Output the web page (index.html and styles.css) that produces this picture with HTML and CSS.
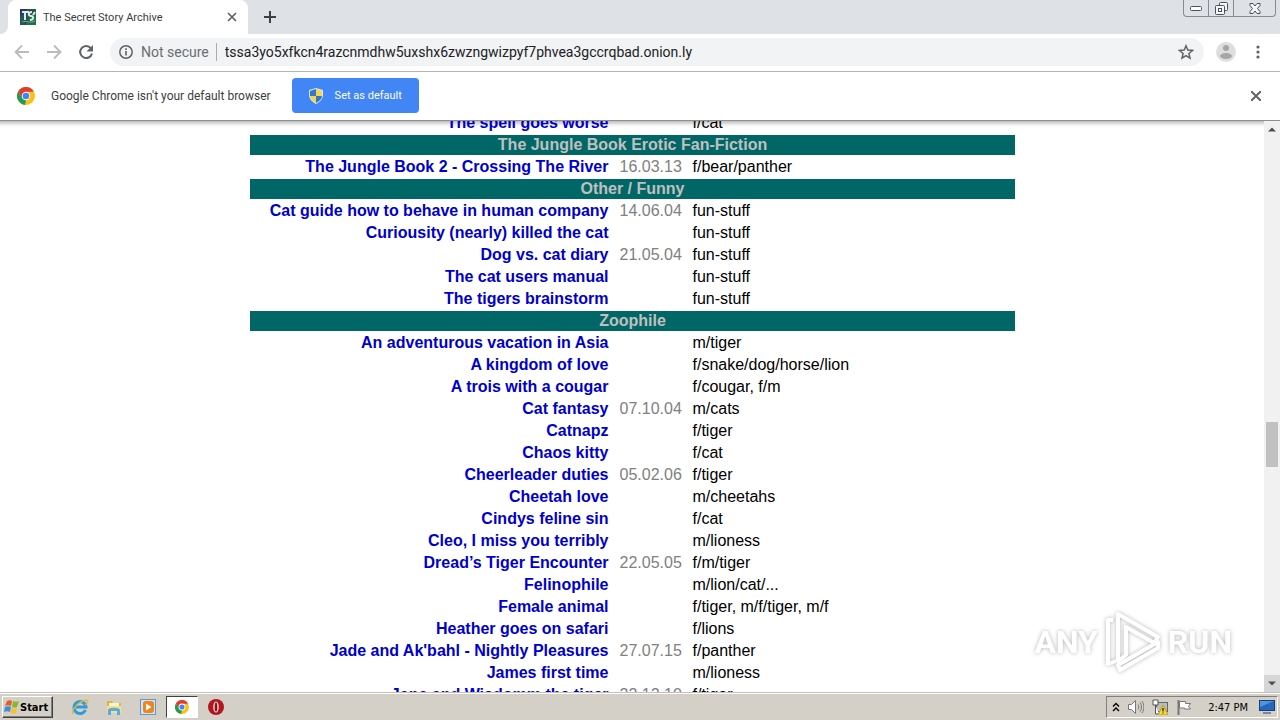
FILE: index.html
```
<!DOCTYPE html>
<html lang="en">
<head>
  <meta charset="UTF-8">
  <meta name="viewport" content="width=device-width, initial-scale=1.0">
  <title>The Secret Story Archive</title>
  <link rel="stylesheet" href="styles.css">
</head>
<body>
  <header class="tab-strip">
    <div class="tab-edge"></div>
    <div class="tab">
      <svg class="favicon" width="16" height="16" viewBox="0 0 16 16">
        <rect width="16" height="16" fill="#23584f"/>
        <path d="M0 0h7l-3 5-4 2z" fill="#26366f"/>
        <path d="M9 9l7-5v12H6z" fill="#1c7243"/>
        <path d="M2 3h7M5 3v8M12 3c-4 0-4 4-1 4s3 4-1 4M13 6l2-3" stroke="#dfe9ee" stroke-width="2" fill="none"/>
        <path d="M2 13c4-2 8 2 13-1" stroke="#7fa9a2" fill="none"/>
      </svg>
      <span class="tab-title">The Secret Story Archive</span>
      <button class="icon-btn" aria-label="Close tab">
        <svg width="10" height="10" viewBox="0 0 10 10"><path d="M1 1l8 8M9 1l-8 8" stroke="#5f6368" stroke-width="1.7"/></svg>
      </button>
    </div>
    <button class="icon-btn new-tab" aria-label="New tab">
      <svg width="12" height="12" viewBox="0 0 12 12"><path d="M6 0v12M0 6h12" stroke="#3c4043" stroke-width="2"/></svg>
    </button>
    <div class="window-buttons">
      <button aria-label="Minimize"><svg width="12" height="5" viewBox="0 0 12 5"><rect x=".5" y=".5" width="11" height="4" rx="1" fill="#fff" stroke="#4a505c"/></svg></button>
      <button aria-label="Restore"><svg width="13" height="13" viewBox="0 0 13 13" fill="#f5f6f8" stroke="#4a505c"><rect x="4.500" y=".5" width="8" height="8" rx="1"/><rect x=".5" y="3.500" width="9" height="9" rx="1"/><rect x="3.500" y="6.500" width="3" height="3"/></svg></button>
      <button class="close" aria-label="Close"><svg width="12" height="11" viewBox="0 0 12 11"><path d="M1 .5h3l2 2.500 2-2.500h3v2L8.500 5.500 11 8.500v2H8L6 8l-2 2.500H1v-2l2.500-3L1 2.500z" fill="#f5f6f8" stroke="#4a505c"/></svg></button>
    </div>
  </header>

  <nav class="toolbar">
    <button class="icon-btn" aria-label="Back"><svg width="16" height="16" viewBox="0 0 16 16"><path d="M15 8H2M8 1.500L1.500 8 8 14.500" fill="none" stroke="#babcbe" stroke-width="1.800"/></svg></button>
    <button class="icon-btn" aria-label="Forward"><svg width="16" height="16" viewBox="0 0 16 16"><path d="M1 8h13M8 1.500L14.500 8 8 14.500" fill="none" stroke="#babcbe" stroke-width="1.800"/></svg></button>
    <button class="icon-btn" aria-label="Reload"><svg width="16" height="16" viewBox="0 0 16 16"><path d="M12.800 4.200A6 6 0 1 0 14 9.500" fill="none" stroke="#5f6368" stroke-width="2"/><path d="M15 1v6.500H8.500z" fill="#5f6368"/></svg></button>
    <div class="omnibox">
      <svg width="14" height="14" viewBox="0 0 14 14"><circle cx="7" cy="7" r="6.200" fill="none" stroke="#5f6368" stroke-width="1.500"/><path d="M7 6v4.500M7 3.300v1.700" stroke="#5f6368" stroke-width="1.600"/></svg>
      <label class="security" for="address">Not secure</label>
      <input id="address" class="address" type="text" value="tssa3yo5xfkcn4razcnmdhw5uxshx6zwzngwizpyf7phvea3gccrqbad.onion.ly">
      <button class="icon-btn" aria-label="Bookmark"><svg width="16" height="16" viewBox="0 0 16 16"><path d="M8 1.800l1.800 4.300 4.700.4-3.600 3 1.100 4.600-4-2.500-4 2.500 1.100-4.600-3.600-3 4.700-.4z" fill="none" stroke="#5f6368" stroke-width="1.500"/></svg></button>
    </div>
    <button class="icon-btn" aria-label="Profile"><svg width="20" height="20" viewBox="0 0 20 20"><circle cx="10" cy="10" r="10" fill="#dedede"/><circle cx="10" cy="6" r="3" fill="#a6a6a6"/><ellipse cx="10" cy="14" rx="6" ry="3" fill="#a6a6a6"/></svg></button>
    <button class="icon-btn menu-btn" aria-label="Menu"><svg width="16" height="16" viewBox="0 0 16 16" fill="#5f6368"><circle cx="8" cy="3" r="1.600"/><circle cx="8" cy="8" r="1.600"/><circle cx="8" cy="13" r="1.600"/></svg></button>
  </nav>

  <div class="infobar">
    <svg width="18" height="18" viewBox="0 0 18 18">
      <circle cx="9" cy="9" r="9" fill="#fbc116"/>
      <path d="M1.200 4.500A9 9 0 0 1 16.800 4.500L9 5 5 11z" fill="#e33b2e"/>
      <path d="M1.200 4.500L5 11l4 2-1 5A9 9 0 0 1 1.200 4.500z" fill="#1f9d55"/>
      <circle cx="9" cy="9" r="4.200" fill="#fff"/><circle cx="9" cy="9" r="3.300" fill="#4285f4"/>
    </svg>
    <span class="infobar-text">Google Chrome isn't your default browser</span>
    <button class="default-btn">
      <svg width="14" height="16" viewBox="0 0 14 16">
        <path d="M7 0l7 2v5c0 4-3 7-7 9-4-2-7-5-7-9V2z" fill="#d8e4f0"/>
        <path d="M7 1v7H1V3z" fill="#3476ca"/><path d="M7 1l6 2v5H7z" fill="#fbd44c"/>
        <path d="M1 8h6v7C4 13 1 11 1 8z" fill="#fbd44c"/><path d="M7 8h6c0 3-3 5-6 7z" fill="#3476ca"/>
      </svg>
      Set as default
    </button>
    <button class="icon-btn infobar-close" aria-label="Dismiss"><svg width="10" height="10" viewBox="0 0 10 10"><path d="M0 0l10 10M10 0L0 10" stroke="#5f6368" stroke-width="2"/></svg></button>
  </div>

  <main class="viewport">
    <div class="page">
      <table class="stories">
        <colgroup><col class="col-title"><col class="col-date"><col></colgroup>
        <tr><td><a href="#">The spell goes worse</a></td><td></td><td>f/cat</td></tr>
        <tr><th colspan="3">The Jungle Book Erotic Fan-Fiction</th></tr>
        <tr><td><a href="#">The Jungle Book 2 - Crossing The River</a></td><td>16.03.13</td><td>f/bear/panther</td></tr>
        <tr><th colspan="3">Other / Funny</th></tr>
        <tr><td><a href="#">Cat guide how to behave in human company</a></td><td>14.06.04</td><td>fun-stuff</td></tr>
        <tr><td><a href="#">Curiousity (nearly) killed the cat</a></td><td></td><td>fun-stuff</td></tr>
        <tr><td><a href="#">Dog vs. cat diary</a></td><td>21.05.04</td><td>fun-stuff</td></tr>
        <tr><td><a href="#">The cat users manual</a></td><td></td><td>fun-stuff</td></tr>
        <tr><td><a href="#">The tigers brainstorm</a></td><td></td><td>fun-stuff</td></tr>
        <tr><th colspan="3">Zoophile</th></tr>
        <tr><td><a href="#">An adventurous vacation in Asia</a></td><td></td><td>m/tiger</td></tr>
        <tr><td><a href="#">A kingdom of love</a></td><td></td><td>f/snake/dog/horse/lion</td></tr>
        <tr><td><a href="#">A trois with a cougar</a></td><td></td><td>f/cougar, f/m</td></tr>
        <tr><td><a href="#">Cat fantasy</a></td><td>07.10.04</td><td>m/cats</td></tr>
        <tr><td><a href="#">Catnapz</a></td><td></td><td>f/tiger</td></tr>
        <tr><td><a href="#">Chaos kitty</a></td><td></td><td>f/cat</td></tr>
        <tr><td><a href="#">Cheerleader duties</a></td><td>05.02.06</td><td>f/tiger</td></tr>
        <tr><td><a href="#">Cheetah love</a></td><td></td><td>m/cheetahs</td></tr>
        <tr><td><a href="#">Cindys feline sin</a></td><td></td><td>f/cat</td></tr>
        <tr><td><a href="#">Cleo, I miss you terribly</a></td><td></td><td>m/lioness</td></tr>
        <tr><td><a href="#">Dread’s Tiger Encounter</a></td><td>22.05.05</td><td>f/m/tiger</td></tr>
        <tr><td><a href="#">Felinophile</a></td><td></td><td>m/lion/cat/...</td></tr>
        <tr><td><a href="#">Female animal</a></td><td></td><td>f/tiger, m/f/tiger, m/f</td></tr>
        <tr><td><a href="#">Heather goes on safari</a></td><td></td><td>f/lions</td></tr>
        <tr><td><a href="#">Jade and Ak'bahl - Nightly Pleasures</a></td><td>27.07.15</td><td>f/panther</td></tr>
        <tr><td><a href="#">James first time</a></td><td></td><td>m/lioness</td></tr>
        <tr><td><a href="#">Jane and Wisdomm the tiger</a></td><td>22.12.10</td><td>f/tiger</td></tr>
      </table>
    </div>
    <div class="scrollbar">
      <svg width="16" height="17" viewBox="0 0 16 17"><path d="M4 10.500L8 6.500l4 4z" fill="#505050"/></svg>
      <div class="track"><div class="thumb"></div></div>
      <svg width="16" height="17" viewBox="0 0 16 17"><rect width="16" height="17" fill="#d6d6d6"/><path d="M4 6.500l4 4 4-4z" fill="#505050"/></svg>
    </div>
    <div class="watermark">
      <span>ANY</span>
      <svg width="58" height="64" viewBox="0 0 58 64" fill="none" stroke="#fff" stroke-width="4" stroke-linejoin="round">
        <path d="M14 4L54 27 50 33 22 17v28l-8 6z"/>
        <path d="M9 10H4v44l8-3M16 60l38-22v-6L14 55z"/>
      </svg>
      <span>RUN</span>
    </div>
  </main>

  <footer class="taskbar">
    <button class="start">
      <svg width="16" height="16" viewBox="0 0 16 16">
        <path d="M3 2c2-1 3-1 5 0L7 7C5 6 3 6 1 7z" fill="#ea5a24"/><path d="M9 2c2 1 4 1 6 0l-2 6c-2 1-3 1-5 0z" fill="#86b832"/>
        <path d="M1 8c2-1 4-1 6 0l-1 5c-2-1-4-1-6 0z" fill="#3b8ede"/><path d="M8 9c2 1 3 1 5 0l-1 5c-2 1-4 1-6 0z" fill="#f8c12c"/>
      </svg>
      Start
    </button>
    <button class="task" aria-label="Internet Explorer"><svg width="18" height="18" viewBox="0 0 18 18" fill="none"><path d="M14.500 12a6 6 0 1 1 .5-3H5" stroke="#2f9bdc" stroke-width="3"/><path d="M2 16C-1 13 9 2 16 2c2 1 0 4-2 5" stroke="#e5b73a" stroke-width="1.300"/></svg></button>
    <button class="task" aria-label="Windows Explorer"><svg width="18" height="18" viewBox="0 0 18 18"><path d="M2 3h5l1 2h8v10H2z" fill="#dfb44a"/><path d="M4 5h10v3H4z" fill="#fff4c4"/><path d="M2 8h14v7H2z" fill="#f5df8e"/><path d="M3 17v-5c0-3 12-3 12 0v5h-3v-4H6v4z" fill="#58addd"/></svg></button>
    <button class="task" aria-label="Media Player"><svg width="18" height="18" viewBox="0 0 18 18"><rect x="1.500" y="1.500" width="15" height="15" fill="#cfe4f5" stroke="#5b9bd0"/><rect x="4" y="3" width="11" height="12" rx="3" fill="#f0851c"/><path d="M7 5.500v7L12.500 9z" fill="#fff"/></svg></button>
    <button class="task active" aria-label="Google Chrome"><svg width="14" height="14" viewBox="0 0 18 18"><circle cx="9" cy="9" r="9" fill="#fbc116"/><path d="M1.200 4.500A9 9 0 0 1 16.800 4.500L9 5 5 11z" fill="#e33b2e"/><path d="M1.200 4.500L5 11l4 2-1 5A9 9 0 0 1 1.200 4.500z" fill="#1f9d55"/><circle cx="9" cy="9" r="4.400" fill="#fff"/><circle cx="9" cy="9" r="3.300" fill="#4285f4"/></svg></button>
    <button class="task" aria-label="Opera"><svg width="18" height="18" viewBox="0 0 18 18"><circle cx="9" cy="9" r="8" fill="#b3141d"/><ellipse cx="9" cy="9" rx="2.800" ry="5.500" fill="#e9d6d6"/><ellipse cx="9" cy="9" rx="1.300" ry="4.500" fill="#8b0f16"/></svg></button>

    <div class="tray">
      <svg width="8" height="10" viewBox="0 0 8 10"><path d="M1 4.500l3-3 3 3M1 9l3-3 3 3" fill="none" stroke="#000" stroke-width="1.400"/></svg>
      <svg width="16" height="16" viewBox="0 0 16 16" stroke="#777"><path d="M.5 5.500h3l4-4v13l-4-4h-3z" fill="#fff"/><path d="M10 5.500c1 1.500 1 3.500 0 5M12 3.500c2 3 2 6 0 9M14 2c2.500 4 2.500 8 0 12" fill="none"/></svg>
      <svg width="16" height="16" viewBox="0 0 16 16"><rect x="4.500" y="3.500" width="11" height="9" fill="#b9bcc0" stroke="#666"/><path d="M1 1h5v5H1zM3.500 6v9H7" fill="#fff" stroke="#555"/><path d="M11 6l5 10H6z" fill="#ffdc2e" stroke="#b9991b"/><path d="M11 9v3.500M11 13.500v1" stroke="#222" stroke-width="1.300"/></svg>
      <svg width="16" height="16" viewBox="0 0 16 16"><path d="M2.500 1v15" stroke="#777" stroke-width="2"/><path d="M3.500 2.500h6v2h5l-2 3 2 2.500h-6V9h-5z" fill="#fff" stroke="#777"/></svg>
      <time class="clock">2:47 PM</time>
      <svg class="desktop" width="16" height="14" viewBox="0 0 16 14"><rect x=".5" y=".5" width="15" height="10" fill="#2467bd" stroke="#173f78"/><path d="M1 1h14L1 7z" fill="#4f94dd"/><path d="M4 13h8" stroke="#7b8794" stroke-width="2"/></svg>
    </div>
  </footer>
</body>
</html>
```
FILE: styles.css
```
* {
  margin: 0;
  padding: 0;
  box-sizing: border-box;
}

body {
  display: flex;
  flex-direction: column;
  height: 100vh;
  overflow: hidden;
  background: #fff;
  color: #000;
  font-family: Roboto, "Noto Sans", sans-serif;
  font-size: 12px;
}

button,
input {
  font: inherit;
  color: inherit;
  background: none;
  border: none;
}

svg {
  display: block;
  flex: none;
}

.icon-btn {
  display: flex;
  flex: none;
}

/* Tabs */
.tab-strip {
  display: flex;
  flex: none;
  height: 34px;
  background: #dee1e6;
}

.tab-edge {
  width: 8px;
  background: #fff;
}

.tab-edge::before {
  content: "";
  display: block;
  height: 100%;
  background: #dee1e6;
  border-bottom-right-radius: 8px;
}

.tab {
  display: flex;
  align-items: center;
  width: 240px;
  padding: 0 11px 0 12px;
  background: #fff;
  border-radius: 8px 8px 0 0;
}

.tab-title {
  flex: 1;
  margin-left: 7px;
  color: #3c4043;
  font-size: 11px;
  white-space: nowrap;
}

.new-tab {
  align-items: center;
  margin-left: 16px;
}

.window-buttons {
  display: flex;
  height: 17px;
  margin-left: auto;
  margin-right: 4px;
  border: 1px solid #858b96;
  border-top: none;
  border-radius: 0 0 4px 4px;
}

.window-buttons button {
  display: flex;
  align-items: center;
  justify-content: center;
  width: 25px;
  border-right: 1px solid #858b96;
}

.window-buttons .close {
  width: 41px;
  border-right: none;
}

/* Toolbar */
.toolbar {
  display: flex;
  flex: none;
  align-items: center;
  gap: 16px;
  height: 38px;
  padding: 0 14px 1px;
  border-bottom: 1px solid #b3b5b8;
}

.omnibox {
  display: flex;
  flex: 1;
  align-items: center;
  height: 28px;
  padding: 0 10px 0 9px;
  background: #f1f3f4;
  border-radius: 14px;
  font-size: 14px;
}

.security {
  margin: 0 7px 0 8px;
  color: #6a6e73;
}

.address {
  flex: 1;
  height: 18px;
  padding-left: 8px;
  border-left: 1px solid #a9acb0;
  color: #202124;
}

.omnibox + .icon-btn {
  margin-left: -4px;
}

.menu-btn {
  margin-left: -2px;
}

.infobar {
  display: flex;
  flex: none;
  align-items: center;
  height: 49px;
  padding: 0 19px 1px 17px;
  border-bottom: 1px solid #8f8f8f;
}

.infobar-text {
  margin: 0 21px 0 16px;
  color: #3c4043;
}

.default-btn {
  display: flex;
  align-items: center;
  gap: 12px;
  height: 35px;
  padding: 0 17px;
  background: #4285f4;
  border-radius: 4px;
  color: #fff;
  font-size: 11px;
}

.infobar-close {
  margin-left: auto;
}

/* Page */
.viewport {
  position: relative;
  display: flex;
  flex: 1;
  min-height: 0;
  overflow: hidden;
  box-shadow: inset 0 6px 4px -4px #b0b0b0;
}

.page {
  flex: 1;
  font-family: "Liberation Sans", Arial, sans-serif;
  font-size: 16px;
  line-height: 18px;
}

.stories {
  width: 769px;
  max-width: 100%;
  margin: -10px auto 0;
  border-spacing: 2px;
  table-layout: fixed;
}

.col-title {
  width: 363px;
}

.col-date {
  width: 71px;
}

.stories td,
.stories th {
  height: 20px;
  padding: 1px 4px 1px 5px;
  white-space: nowrap;
}

.stories th {
  background: #006666;
  color: #c0c0c0;
}

.stories td:first-child {
  text-align: right;
  font-weight: bold;
}

.stories td:nth-child(2) {
  color: #808080;
}

.stories a {
  color: #0000cc;
  text-decoration: none;
}

.scrollbar {
  display: flex;
  flex-direction: column;
  width: 16px;
  background: #f1f1f1;
}

.track {
  display: flex;
  flex: 1;
  flex-direction: column;
  padding: 0 2px;
}

.track::before {
  content: "";
  flex: 284;
}

.track::after {
  content: "";
  flex: 208;
}

.thumb {
  flex: 45;
  background: #c1c1c1;
}

.watermark {
  position: absolute;
  right: 48px;
  bottom: 18px;
  display: flex;
  align-items: center;
  gap: 6px;
  color: #fff;
  font-size: 32px;
  font-weight: bold;
  filter: drop-shadow(0 0 2px #b5b5b5);
}

/* Taskbar */
.taskbar {
  display: flex;
  flex: none;
  align-items: center;
  height: 28px;
  padding: 1px 2px 0;
  background: #d4d0c8;
  border-top: 1px solid #c4c0b8;
  box-shadow: inset 0 1px #fff;
  font-family: "DejaVu Sans Condensed", "DejaVu Sans", sans-serif;
  font-size: 11px;
}

.start {
  display: flex;
  align-items: center;
  height: 22px;
  margin-right: 11px;
  padding: 0 4px 0 1px;
  border: 1px solid;
  border-color: #fff #404040 #404040 #fff;
  box-shadow: inset -1px -1px #808080;
  font-weight: bold;
}

.task {
  display: flex;
  align-items: center;
  justify-content: center;
  width: 32px;
  height: 22px;
  margin-right: 2px;
}

.task.active {
  background: #fff;
  border: 1px solid;
  border-color: #404040 #fff #fff #404040;
}

.tray {
  display: flex;
  align-items: center;
  gap: 8px;
  height: 22px;
  margin-left: auto;
  padding: 0 2px 0 5px;
  border: 1px solid;
  border-color: #808080 #fff #fff #808080;
}

.clock {
  margin: 0 3px 0 8px;
}
```
